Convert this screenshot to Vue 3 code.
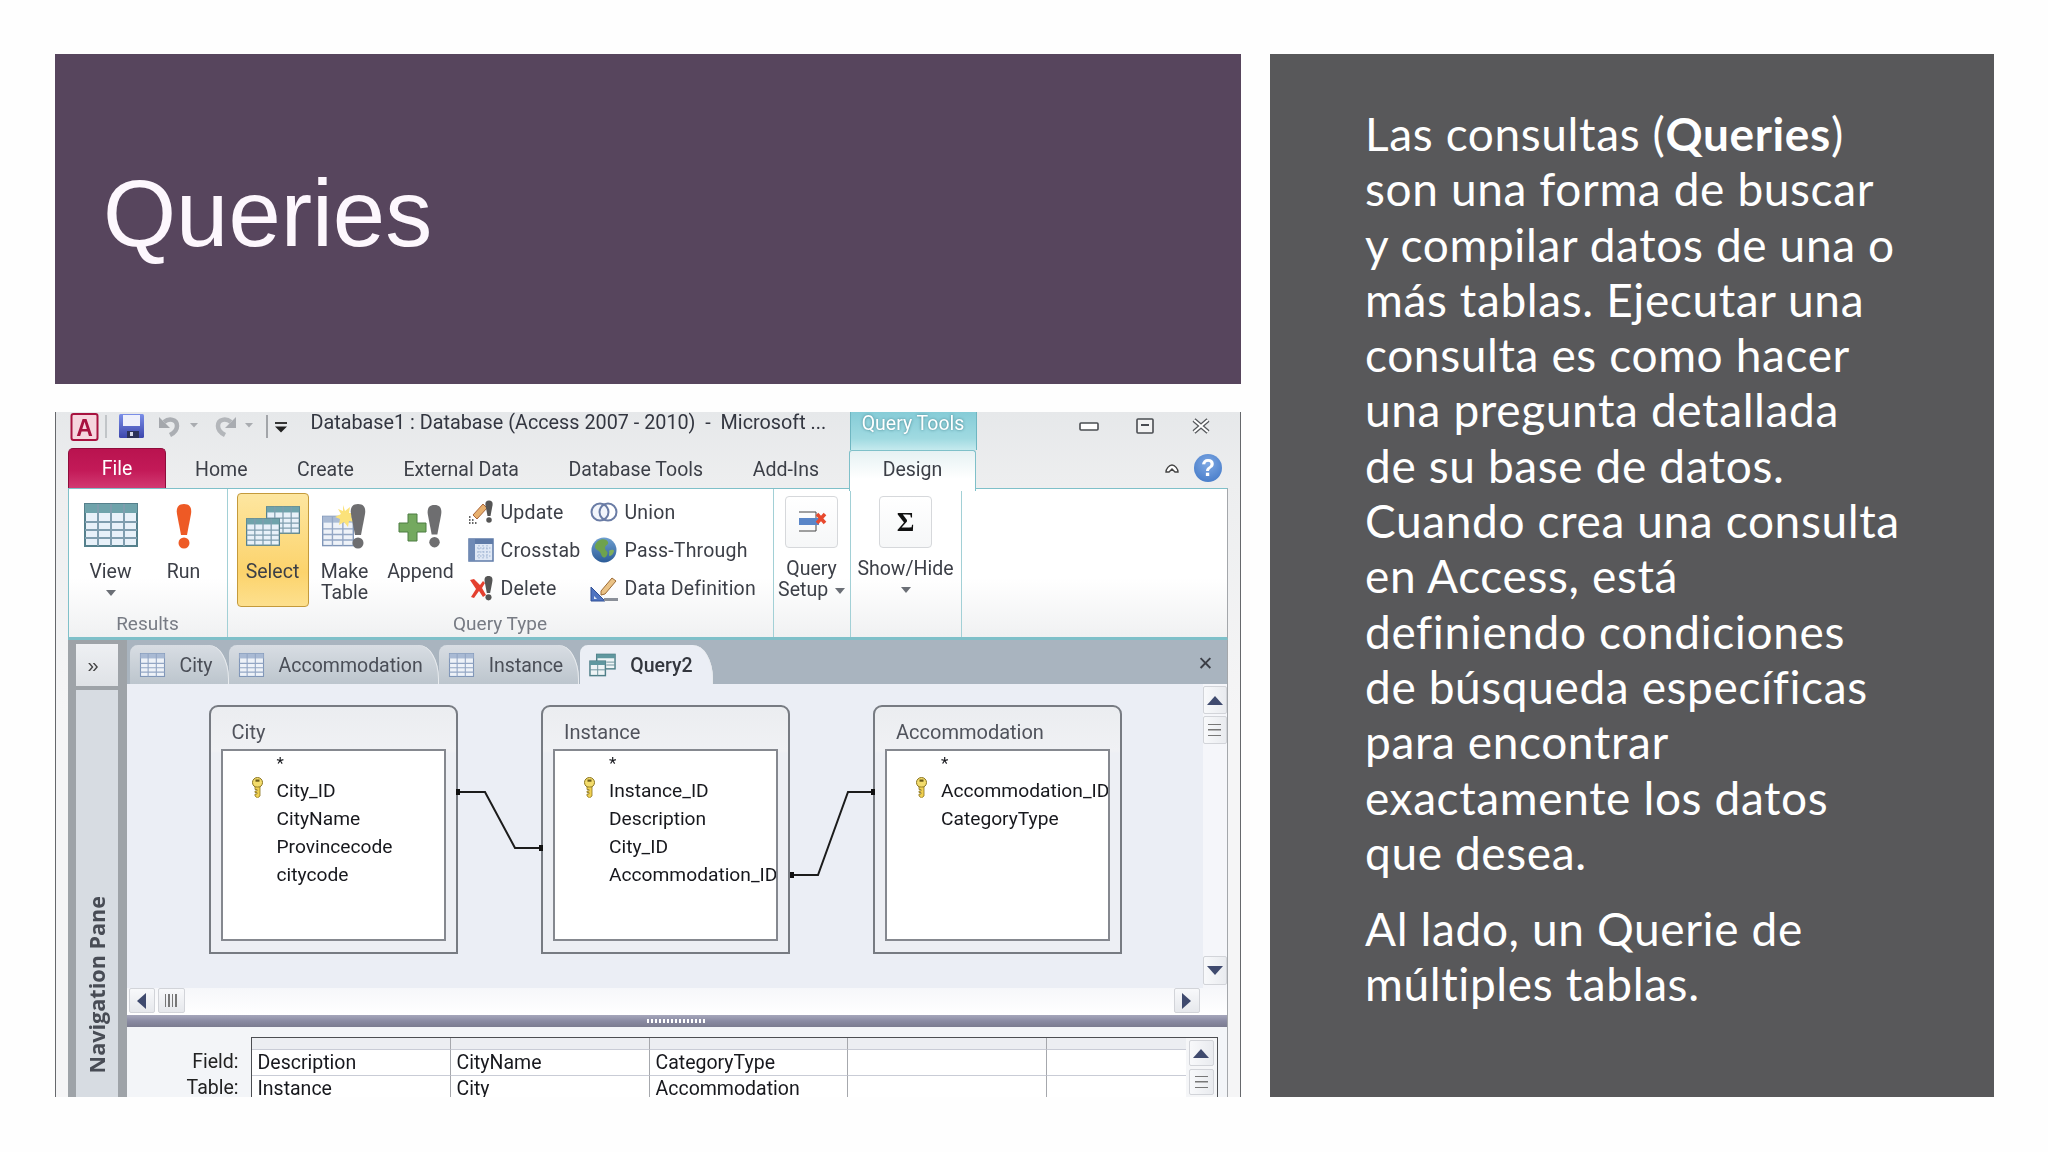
<script setup>
const tabs = ['Home', 'Create', 'External Data', 'Database Tools', 'Add-Ins']

const docTabs = [
  { name: 'City', icon: 'tbl' },
  { name: 'Accommodation', icon: 'tbl' },
  { name: 'Instance', icon: 'tbl' },
  { name: 'Query2', icon: 'qry', active: true },
]

const boxes = [
  { name: 'City', left: 82, fields: ['City_ID', 'CityName', 'Provincecode', 'citycode'] },
  { name: 'Instance', left: 414.5, fields: ['Instance_ID', 'Description', 'City_ID', 'Accommodation_ID'] },
  { name: 'Accommodation', left: 746.5, fields: ['Accommodation_ID', 'CategoryType'] },
]

const gridRows = [
  ['', '', '', '', ''],
  ['Description', 'CityName', 'CategoryType', '', ''],
  ['Instance', 'City', 'Accommodation', '', ''],
]
</script>

<template>
  <div class="slide">
    <svg class="defs" width="0" height="0">
      <symbol id="tbl" viewBox="0 0 54 44">
        <rect x="1" y="1" width="52" height="42" fill="#e8f1f9" stroke="#55808c" stroke-width="2" />
        <rect x="1" y="1" width="52" height="9" fill="#6fa3ab" />
        <path d="M1 19h52M1 27h52M1 35h52M14 1v42M27 1v42M40 1v42" stroke="#7f9dae" stroke-width="2" fill="none" />
      </symbol>
      <symbol id="blue-tbl" viewBox="0 0 46 44">
        <rect x="1" y="1" width="44" height="42" fill="#eef2f8" stroke="#8096b8" stroke-width="2" />
        <rect x="1" y="1" width="44" height="9" fill="#a9bad4" />
        <path d="M1 19h44M1 27h44M1 35h44M15 1v42M30 1v42" stroke="#93a6c4" stroke-width="2" fill="none" />
      </symbol>
      <symbol id="qry" viewBox="0 0 28 24">
        <rect x="8" y="1" width="19" height="15" fill="#eef4f6" stroke="#4f7f88" stroke-width="1.5" />
        <rect x="8" y="1" width="19" height="4" fill="#5f979f" />
        <rect x="1" y="8" width="16" height="15" fill="#eef4f6" stroke="#4f7f88" stroke-width="1.5" />
        <rect x="1" y="8" width="16" height="4" fill="#5f979f" />
        <path d="M1 17h16M9 12v11M18 9h9M18 12h9" stroke="#6c939c" fill="none" />
      </symbol>
      <symbol id="bang" viewBox="0 0 20 46">
        <path d="M10 1C4 1 2 5 3 11l4 21h6l4-21C18 5 16 1 10 1Z" fill="currentColor" />
        <circle cx="10" cy="40" r="5.5" fill="currentColor" />
      </symbol>
      <symbol id="key" viewBox="0 0 13 21">
        <circle cx="6.500" cy="5.500" r="5" fill="#f3dc6c" stroke="#8a7420" />
        <path d="M4 10h5v9l-2.500 2L4 19v-2h2v-1.500H4v-1.500h2v-1.500H4Z" fill="#f0d050" stroke="#8a7420" stroke-width=".8" />
        <rect x="4.500" y="2.500" width="4" height="2.200" fill="#6b5a18" />
      </symbol>
      <linearGradient id="floppy" x1="0" y1="0" x2="0" y2="1">
        <stop offset="0" stop-color="#7b8fe8" />
        <stop offset="1" stop-color="#3c46ac" />
      </linearGradient>
      <linearGradient id="globe" x1="0" y1="0" x2="0" y2="1">
        <stop offset="0" stop-color="#6e9fd0" />
        <stop offset="1" stop-color="#2c5c98" />
      </linearGradient>
    </svg>

    <div class="left">
      <header class="title-panel">
        <h1>Queries</h1>
      </header>

      <div class="win">
        <div class="titlebar">
          <svg class="qat" width="241" height="36" viewBox="0 0 241 36">
            <rect x="1.500" y="2" width="26" height="26" rx="2" fill="#f6d5de" stroke="#a8123f" stroke-width="2" />
            <text x="14.500" y="24" text-anchor="middle" font-family="Liberation Sans, sans-serif" font-weight="700" font-size="23" fill="#a8123f">A</text>
            <path d="M36 3v23" stroke="#b5b8bd" stroke-width="1.500" />
            <rect x="49" y="2" width="25" height="24" rx="1.500" fill="url(#floppy)" />
            <rect x="53" y="3" width="17" height="11" fill="#eef0fb" />
            <rect x="57" y="19" width="12" height="7" fill="#2c3258" />
            <rect x="60" y="20" width="3" height="4" fill="#d5d8e8" />
            <path d="M89 5v11h11Z" fill="#a4a7ac" />
            <path d="M94 10c5-4 13-3 13 4 0 4-3 7-7 9" stroke="#abaeb3" stroke-width="4.500" fill="none" />
            <path d="M120 11h8l-4 4.500Z" fill="#a9acb0" />
            <path d="M166 5v11h-11Z" fill="#a9acb1" />
            <path d="M161 10c-5-4-13-3-13 4 0 4 3 7 7 9" stroke="#b3b6ba" stroke-width="4.500" fill="none" />
            <path d="M175 11h8l-4 4.500Z" fill="#a9acb0" />
            <path d="M197 3v23" stroke="#8b8e93" stroke-width="1.500" />
            <path d="M205 11h12" stroke="#222" stroke-width="1.800" />
            <path d="M205 14.500h12l-6 6Z" fill="#222" />
          </svg>
          <div class="win-title">Database1 : Database (Access 2007 - 2010)&nbsp; -&nbsp; Microsoft ...</div>
          <div class="query-tools"><span>Query Tools</span></div>
          <div class="win-btns">
            <svg width="20" height="12" viewBox="0 0 20 12"><rect x="1" y="3" width="18" height="7" rx="1" fill="#fff" stroke="#4a4d52" stroke-width="1.600" /></svg>
            <svg width="18" height="16" viewBox="0 0 18 16"><rect x="1" y="1" width="16" height="14" rx="1" fill="#f3f3f3" stroke="#4a4d52" stroke-width="1.600" /><path d="M5 7h8" stroke="#4a4d52" stroke-width="2" /></svg>
            <svg width="20" height="16" viewBox="0 0 20 16"><path d="M3 2l14 12M17 2L3 14" stroke="#55585c" stroke-width="4.500" /><path d="M3 2l14 12M17 2L3 14" stroke="#fff" stroke-width="2" /></svg>
          </div>
        </div>

        <div class="tabrow">
          <div class="file-tab">File</div>
          <div class="tab-list">
            <span v-for="tab in tabs" :key="tab">{{ tab }}</span>
          </div>
          <div class="design-tab">Design</div>
          <div class="tab-right">
            <svg width="16" height="12" viewBox="0 0 16 12"><path d="M2 10c0-3 3-7 6-7s6 4 6 7l-3 0-3-3-3 3Z" fill="#fff" stroke="#444" stroke-width="1.400" /></svg>
            <div class="help">?</div>
          </div>
        </div>

        <div class="ribbon">
          <section class="group g-results">
            <div class="group-body">
              <div class="big w74">
                <svg class="big-icon" width="54" height="46"><use href="#tbl" width="54" height="44" /></svg>
                <span>View</span>
                <i class="drop"></i>
              </div>
              <div class="big w72">
                <svg class="big-icon" width="20" height="46" style="color:#ee5a25"><use href="#bang" width="20" height="46" /></svg>
                <span>Run</span>
              </div>
            </div>
            <div class="group-name">Results</div>
          </section>

          <section class="group g-type">
            <div class="group-body">
              <div class="big w72 selected">
                <svg class="big-icon" width="54" height="46" viewBox="0 0 54 46">
                  <use href="#tbl" x="20" y="0" width="34" height="34" />
                  <use href="#tbl" x="0" y="12" width="34" height="34" />
                </svg>
                <span>Select</span>
              </div>
              <div class="big w72">
                <svg class="big-icon" width="46" height="46" viewBox="0 0 46 46" style="color:#6e6e70">
                  <use href="#blue-tbl" x="0" y="12" width="32" height="32" />
                  <path d="M21 2l2 6 5-4-1 6 7 0-5 4 4 5-6-1-1 6-4-5-5 3 1-6-5-2 6-3-3-5 5 2Z" fill="#fbe27a" />
                  <use href="#bang" x="26" y="0" width="20" height="46" />
                </svg>
                <span>Make<br />Table</span>
              </div>
              <div class="big w80">
                <svg class="big-icon" width="46" height="46" viewBox="0 0 46 46" style="color:#6e6e70">
                  <path d="M10 11h9v9h9v9h-9v9h-9v-9H1v-9h9Z" fill="#74a95f" stroke="#4d7d43" />
                  <use href="#bang" x="27" y="0" width="19" height="46" />
                </svg>
                <span>Append</span>
              </div>
              <div class="small-col c1">
                <div class="small">
                  <svg width="26" height="26" viewBox="0 0 26 26" style="color:#555">
                    <path d="M5 16L15 5l4 4-10 11Z" fill="#e8b06e" stroke="#a8643a" />
                    <path d="M1 18h1.500M4 21h1.500M1 21h1.500M1 24h1.500M4 24h1.500M7 24h1.500" stroke="#333" stroke-width="1.500" />
                    <use href="#bang" x="16" y="0" width="10" height="25" />
                  </svg>
                  <span>Update</span>
                </div>
                <div class="small">
                  <svg width="26" height="26" viewBox="0 0 26 26">
                    <rect x="1" y="2" width="24" height="22" fill="#dfe8f5" stroke="#5f7ba8" stroke-width="1.500" />
                    <rect x="1" y="2" width="24" height="5" fill="#5f7ba8" />
                    <rect x="1" y="2" width="6" height="22" fill="#6f8ab5" />
                    <path d="M9 11h14M9 15h14M9 19h14M11 8v15M15 8v15M19 8v15" stroke="#9ab0d0" stroke-dasharray="1.500 1.500" />
                  </svg>
                  <span>Crosstab</span>
                </div>
                <div class="small">
                  <svg width="26" height="26" viewBox="0 0 26 26" style="color:#555">
                    <path d="M2 5l4-1 6 6 3-4 2 2-3 5 4 7-3 2-4-6-5 7-3-1 5-8Z" fill="#e4402f" />
                    <use href="#bang" x="15" y="0" width="11" height="26" />
                  </svg>
                  <span>Delete</span>
                </div>
              </div>
              <div class="small-col">
                <div class="small">
                  <svg width="28" height="26" viewBox="0 0 28 26"><circle cx="10" cy="13" r="8.500" fill="#f2f5fb" stroke="#6a7ca5" stroke-width="2" /><circle cx="18" cy="13" r="8.500" fill="none" stroke="#6a7ca5" stroke-width="2" /></svg>
                  <span>Union</span>
                </div>
                <div class="small">
                  <svg width="28" height="28" viewBox="0 0 28 28"><circle cx="14" cy="14" r="12.500" fill="url(#globe)" /><path d="M8 5c4-3 9-2 10 1s-3 3-3 6 4 3 2 7-5 3-6-1-6-4-6-7 1-4 3-6Z" fill="#6ea24e" /><path d="M19 15c3-2 5-1 5 0s-2 5-4 5 0-3-1-5Z" fill="#7fae5c" /></svg>
                  <span>Pass-Through</span>
                </div>
                <div class="small">
                  <svg width="28" height="28" viewBox="0 0 28 28"><path d="M1 27V13l14 14Z" fill="#4f74c0" stroke="#2f4f96" /><path d="M4 22v3h3Z" fill="#dfe7f6" /><path d="M11 17L22 4l4 3-11 13-4 1Z" fill="#eac285" stroke="#9c6b35" /><rect x="14" y="24" width="14" height="3" fill="#8a8f98" /></svg>
                  <span>Data Definition</span>
                </div>
              </div>
            </div>
            <div class="group-name">Query Type</div>
          </section>

          <section class="group g-setup">
            <div class="tool-btn">
              <svg width="30" height="26" viewBox="0 0 30 26">
                <path d="M2 3h17M2 22h17M19 3v19" stroke="#444" fill="none" />
                <rect x="2" y="9" width="20" height="7" fill="#5a86c8" />
                <path d="M20 5l8 9M28 5l-8 9" stroke="#e8492e" stroke-width="3.500" />
              </svg>
            </div>
            <div class="tool-label">Query<br />Setup <i class="drop inline"></i></div>
          </section>

          <section class="group g-show">
            <div class="tool-btn"><span class="sigma">Σ</span></div>
            <div class="tool-label">Show/Hide<br /><i class="drop"></i></div>
          </section>
        </div>

        <div class="work">
          <aside class="nav">
            <div class="nav-toggle">»</div>
            <div class="nav-pane"><span>Navigation Pane</span></div>
          </aside>

          <div class="doc">
            <div class="doc-tabs">
              <div v-for="t in docTabs" :key="t.name" class="doc-tab" :class="{ active: t.active }">
                <svg width="27" height="24"><use :href="'#' + (t.icon === 'tbl' ? 'blue-tbl' : 'qry')" width="27" height="24" /></svg>
                <span>{{ t.name }}</span>
              </div>
              <div class="doc-close">✕</div>
            </div>

            <div class="upper">
              <div class="upper-main">
                <div class="canvas">
                  <div v-for="box in boxes" :key="box.name" class="tbox" :style="{ left: box.left + 'px' }">
                    <div class="tbox-title">{{ box.name }}</div>
                    <div class="tbox-list">
                      <div class="star">*</div>
                      <div v-for="(f, i) in box.fields" :key="f" class="field">
                        <svg v-if="i === 0" class="key" width="13" height="21"><use href="#key" width="13" height="21" /></svg>
                        <span>{{ f }}</span>
                      </div>
                    </div>
                  </div>
                  <svg class="joins" width="1076" height="304" viewBox="0 0 1076 304">
                    <path d="M331 108h27l30 56h26M664 191h27l30-83h25" fill="none" stroke="#1c1c1c" stroke-width="2" />
                    <path d="M329 105h4v6h-4ZM412 161h4v6h-4ZM663 188h4v6h-4ZM744 105h4v6h-4Z" fill="#111" />
                  </svg>
                </div>
                <div class="vscroll">
                  <div class="sbtn up"><i class="tri-up"></i></div>
                  <div class="sbtn thumb"><i class="grip"></i></div>
                  <div class="vtrack"></div>
                  <div class="sbtn down"><i class="tri-down"></i></div>
                </div>
              </div>
              <div class="hscroll">
                <div class="hbtn"><i class="tri-left"></i></div>
                <div class="hbtn hthumb"><i class="hgrip"></i></div>
                <div class="htrack"></div>
                <div class="hbtn"><i class="tri-right"></i></div>
              </div>
            </div>

            <div class="splitter"><span class="dots"></span></div>

            <div class="lower">
              <div class="row-labels">
                <div>Field:</div>
                <div>Table:</div>
              </div>
              <div class="qbe">
                <div class="qbe-cells">
                  <template v-for="(row, r) in gridRows" :key="r">
                    <div v-for="(cell, c) in row" :key="c" class="cell" :class="{ head: r === 0 }">{{ cell }}</div>
                  </template>
                </div>
                <div class="qbe-scroll">
                  <div class="sbtn small-up"><i class="tri-up"></i></div>
                  <div class="sbtn small-thumb"><i class="grip"></i></div>
                </div>
              </div>
            </div>
          </div>
        </div>
      </div>
    </div>

    <aside class="notes">
      <p>Las consultas (<b>Queries</b>)<br />son una forma de buscar<br />y compilar datos de una o<br />más tablas. Ejecutar una<br />consulta es como hacer<br />una pregunta detallada<br />de su base de datos.<br />Cuando crea una consulta<br />en Access, está<br />definiendo condiciones<br />de búsqueda específicas<br />para encontrar<br />exactamente los datos<br />que desea.</p>
      <p>Al lado, un Querie de<br />múltiples tablas.</p>
    </aside>
  </div>
</template>

<style scoped>
.slide {
  width: 2048px;
  height: 1152px;
  box-sizing: border-box;
  padding: 54px 54px 55px 55px;
  display: flex;
  gap: 29px;
  background: #fefefe;
  overflow: hidden;
}

.defs {
  position: absolute;
}

.left {
  width: 1186px;
  display: flex;
  flex-direction: column;
  gap: 28px;
}

.title-panel {
  height: 330px;
  background: #57455d;
  display: flex;
  align-items: center;
  padding: 0 0 10px 48px;
  box-sizing: border-box;
}

.title-panel h1 {
  margin: 0;
  color: #fdf7fd;
  font: 400 94px/1 "Liberation Sans", Arial, sans-serif;
}

.notes {
  width: 724px;
  box-sizing: border-box;
  background: #58585a;
  padding: 52px 0 0 95px;
  color: #fff;
  font: 400 46px/55.3px Lato, "Open Sans", sans-serif;
  letter-spacing: 0.62px;
}

.notes p {
  margin: 0 0 21px;
}

/* access window */
.win {
  height: 685px;
  box-sizing: border-box;
  overflow: hidden;
  border-left: 1.5px solid #66686c;
  border-right: 1.5px solid #66686c;
  background: linear-gradient(#e6e8ea 0, #edeeef 70px, #f5f5f6 300px);
  font-family: Roboto, "Noto Sans", sans-serif;
  font-size: 19.5px;
  color: #3c3f47;
  filter: blur(0.45px);
}

.titlebar {
  height: 36px;
  display: flex;
  padding-left: 13.5px;
}

.qat {
  flex: none;
}

.win-title {
  width: 539px;
  flex: none;
  padding-top: 1px;
  line-height: 19px;
  box-sizing: border-box;
  white-space: nowrap;
  font-size: 19.8px;
  color: #333640;
}

.query-tools {
  width: 127px;
  height: 38px;
  flex: none;
  box-sizing: border-box;
  text-align: center;
  background: linear-gradient(#86ccd7, #a0dae1 70%, #c5eaee);
  border-left: 1px solid #6fb6c1;
  border-right: 1px solid #6fb6c1;
  color: #fff;
  font-size: 19.5px;
  line-height: 23px;
  text-shadow: 0 0 3px #3f7f8a;
}

.win-btns {
  flex: 1;
  display: flex;
  align-items: center;
  gap: 37px;
  padding: 0 0 8px 102px;
}

.tabrow {
  height: 40px;
  display: flex;
  position: relative;
  z-index: 1;
  padding-left: 12px;
}

.file-tab {
  width: 98px;
  flex: none;
  box-sizing: border-box;
  border-radius: 5px 5px 0 0;
  background: linear-gradient(#b9134f, #c31a58 55%, #d23a72);
  border: 1px solid #8e0d3b;
  border-bottom: 0;
  color: #fff;
  text-align: center;
  line-height: 40px;
}

.tab-list {
  width: 683px;
  flex: none;
  box-sizing: border-box;
  display: flex;
  justify-content: space-between;
  align-items: center;
  padding: 2px 30px 0 29px;
  white-space: nowrap;
}

.design-tab {
  width: 127px;
  height: 41px;
  margin-top: 2px;
  flex: none;
  box-sizing: border-box;
  text-align: center;
  line-height: 38px;
  border: 1.5px solid #7fc0c9;
  border-bottom: 0;
  border-radius: 3px 3px 0 0;
  background: linear-gradient(#e6f1f3, #fff 70%);
}

.tab-right {
  display: flex;
  align-items: center;
  gap: 14px;
  margin-left: auto;
  padding: 0 18px 0 0;
}

.help {
  width: 28px;
  height: 28px;
  border-radius: 50%;
  background: radial-gradient(circle at 50% 35%, #7fa9e4, #3d74c4);
  color: #fff;
  font: 700 23px/28px "Liberation Sans", sans-serif;
  text-align: center;
}

.ribbon {
  height: 152px;
  box-sizing: border-box;
  margin: 0 12.5px 0 11.5px;
  display: flex;
  background: linear-gradient(#fff 60%, #f0f1f2);
  border: 1.5px solid #7fc0c9;
  border-bottom-width: 3px;
  border-right-color: #a4a7ab;
}

.group {
  height: 100%;
  box-sizing: border-box;
  flex: none;
  position: relative;
  border-right: 1.5px solid #a2d0d6;
}

.g-results {
  width: 159px;
  padding-left: 5px;
}

.g-type {
  width: 546px;
  padding-left: 9px;
}

.g-setup {
  width: 77px;
}

.g-show {
  width: 111px;
}

.group-body {
  display: flex;
  padding-top: 4px;
}

.group-name {
  position: absolute;
  left: 0;
  right: 0;
  top: 124px;
  text-align: center;
  color: #777b84;
  font-size: 19px;
  line-height: 22px;
}

.big {
  height: 114px;
  flex: none;
  box-sizing: border-box;
  display: flex;
  flex-direction: column;
  align-items: center;
  padding-top: 10px;
  text-align: center;
  line-height: 21px;
  white-space: nowrap;
}

.big-icon {
  display: block;
  margin-bottom: 12px;
  flex: none;
}

.w72 {
  width: 72px;
}

.w74 {
  width: 74px;
}

.w80 {
  width: 80px;
}

.selected {
  border: 1px solid #c49a3b;
  border-radius: 4px;
  padding-top: 9px;
  background: linear-gradient(#fde6a0, #fcd36c 70%, #fde08e);
}

.drop {
  display: block;
  width: 0;
  height: 0;
  margin: 8px auto 0;
  border: 5px solid transparent;
  border-top: 6px solid #6b6f76;
  border-bottom: 0;
}

.drop.inline {
  display: inline-block;
  margin: 0 0 2px 2px;
}

.small-col {
  margin-left: 7px;
  width: 122px;
  flex: none;
}

.c1 + .small-col {
  margin-left: 0;
  width: 180px;
}

.small {
  height: 38px;
  display: flex;
  align-items: center;
  gap: 7px;
  white-space: nowrap;
  letter-spacing: 0.2px;
}

.small svg {
  flex: none;
}

.tool-btn {
  width: 53px;
  height: 52px;
  box-sizing: border-box;
  margin: 7px auto 0;
  border: 1.5px solid #d6d8db;
  border-radius: 4px;
  background: linear-gradient(#fff, #f6f7f8);
  display: flex;
  align-items: center;
  justify-content: center;
}

.sigma {
  font: 700 27px/1 "Liberation Serif", serif;
  color: #111;
}

.tool-label {
  margin-top: 10px;
  text-align: center;
  line-height: 21px;
  white-space: nowrap;
}

.work {
  display: flex;
  height: 457px;
  padding-left: 11.5px;
}

.nav {
  width: 59px;
  flex: none;
  box-sizing: border-box;
  background: #9ea3a8;
  padding: 4px 9px 0 8px;
  display: flex;
  flex-direction: column;
  gap: 4px;
}

.nav-toggle {
  height: 42px;
  flex: none;
  background: linear-gradient(#eef0f3, #dfe2e6);
  text-align: center;
  padding-right: 7px;
  font: 400 20px/42px "Liberation Sans", sans-serif;
  color: #444;
}

.nav-pane {
  flex: 1;
  background: #d7dce2;
  display: flex;
  justify-content: center;
  align-items: flex-end;
  padding-bottom: 24px;
}

.nav-pane span {
  writing-mode: vertical-rl;
  transform: rotate(180deg);
  font: 700 21.6px/1 "Open Sans", sans-serif;
  color: #484c55;
  white-space: nowrap;
}

.doc {
  width: 1100px;
  flex: none;
  display: flex;
  flex-direction: column;
  background: #f3f5f8;
  border-right: 1.5px solid #a4a7ab;
  box-sizing: content-box;
}

.doc-tabs {
  height: 44px;
  flex: none;
  box-sizing: border-box;
  padding: 5px 0 0 3px;
  display: flex;
  background: #a9b4bf;
  position: relative;
}

.doc-tab {
  display: flex;
  align-items: center;
  gap: 14px;
  padding: 1px 16px 0 9px;
  white-space: nowrap;
  border-radius: 8px 20px 0 0 / 8px 34px 0 0;
  background: linear-gradient(#d8dde3, #bcc5cd);
  color: #4a4e57;
  box-shadow: inset -1px 0 0 #e8ebee;
}

.doc-tab.active {
  background: #ebeef5;
  color: #33363e;
  font-weight: 500;
  padding-right: 20px;
  margin-left: 1px;
}

.doc-close {
  position: absolute;
  right: 13px;
  top: 14px;
  font: 400 19px/1 "DejaVu Sans", sans-serif;
  color: #3c3f47;
}

.upper {
  height: 331px;
  flex: none;
  display: flex;
  flex-direction: column;
  background: #ebeef5;
}

.upper-main {
  height: 304px;
  flex: none;
  display: flex;
}

.canvas {
  flex: 1;
  position: relative;
}

.joins {
  position: absolute;
  left: 0;
  top: 0;
  pointer-events: none;
}

.tbox {
  position: absolute;
  top: 21px;
  width: 249px;
  height: 249px;
  box-sizing: border-box;
  padding: 0 10px 11px 10px;
  display: flex;
  flex-direction: column;
  border: 2px solid #777b82;
  border-radius: 9px 9px 0 0;
  background: linear-gradient(#ebedf0, #f0f1f4 44px, #edeff4 46px);
}

.tbox-title {
  height: 42px;
  flex: none;
  padding-left: 11px;
  line-height: 50px;
  font-size: 20px;
  color: #50535c;
  white-space: nowrap;
}

.tbox-list {
  flex: 1;
  background: #fff;
  border: 2px solid #85888f;
  overflow: hidden;
  color: #17181d;
  font-size: 19.2px;
}

.star {
  height: 26px;
  padding-left: 54px;
  line-height: 24px;
  font-size: 17px;
}

.field {
  height: 28px;
  padding-left: 54px;
  line-height: 28px;
  white-space: nowrap;
  position: relative;
}

.key {
  position: absolute;
  left: 28px;
  top: 0;
}

.vscroll {
  width: 24px;
  flex: none;
  display: flex;
  flex-direction: column;
  padding-top: 2px;
  box-sizing: border-box;
  background: #f5f6fa;
}

.sbtn {
  flex: none;
  display: flex;
  align-items: center;
  justify-content: center;
  box-sizing: border-box;
  background: linear-gradient(90deg, #f8f9fb, #e9ebef);
  border: 1.5px solid #d2d4d9;
  border-radius: 2px;
}

.up {
  height: 28px;
}

.thumb {
  height: 28px;
  margin-top: 2px;
}

.vtrack {
  flex: 1;
}

.down {
  height: 29px;
  margin-bottom: 3px;
}

.tri-up,
.tri-down,
.tri-left,
.tri-right {
  display: block;
  width: 0;
  height: 0;
  border: 8px solid transparent;
}

.tri-up {
  border-top: 0;
  border-bottom: 9px solid #3f4a6e;
}

.tri-down {
  border-bottom: 0;
  border-top: 9px solid #3f4a6e;
}

.tri-left {
  border-left: 0;
  border-right: 9px solid #3f4a6e;
}

.tri-right {
  border-right: 0;
  border-left: 9px solid #3f4a6e;
}

.grip {
  display: block;
  width: 13px;
  height: 10px;
  border-top: 1.5px solid #777;
  border-bottom: 1.5px solid #777;
  background: linear-gradient(#777, #777) center / 100% 1.5px no-repeat;
}

.hscroll {
  flex: 1;
  display: flex;
  align-items: flex-start;
  gap: 3px;
  padding-left: 2px;
  background: linear-gradient(#f6f7fa, #fff);
}

.hbtn {
  width: 26px;
  height: 25px;
  flex: none;
  box-sizing: border-box;
  display: flex;
  align-items: center;
  justify-content: center;
  background: linear-gradient(#f8f9fb, #e6e8ec);
  border: 1.5px solid #d2d4d9;
  border-radius: 2px;
}

.hthumb {
  width: 27px;
}

.hgrip {
  display: block;
  width: 12px;
  height: 13px;
  background: repeating-linear-gradient(90deg, #777 0 1.5px, transparent 1.5px 3.5px);
}

.htrack {
  width: 983px;
  flex: none;
}

.splitter {
  height: 12px;
  flex: none;
  display: flex;
  align-items: center;
  justify-content: center;
  background: linear-gradient(#a6a7bb, #8a8ba3 50%, #7b7c90);
}

.dots {
  width: 60px;
  height: 4px;
  background: repeating-linear-gradient(90deg, #fff 0 2px, transparent 2px 4px);
}

.lower {
  flex: 1;
  display: flex;
  padding-top: 10px;
  min-height: 0;
  overflow: hidden;
}

.row-labels {
  width: 112px;
  flex: none;
  margin-right: 12px;
  padding-top: 12px;
  text-align: right;
  line-height: 26px;
  color: #222;
}

.qbe {
  width: 967px;
  flex: none;
  height: 84px;
  box-sizing: border-box;
  display: flex;
  border: 1.5px solid #4c4e52;
  background: #fff;
}

.qbe-cells {
  flex: 1;
  display: grid;
  grid-template-columns: 199px 199px 198px 199px 1fr;
  grid-template-rows: 12px 26px 26px;
  color: #17181d;
}

.cell {
  box-sizing: border-box;
  padding-left: 6px;
  line-height: 26px;
  white-space: nowrap;
  border-right: 1.5px solid #a6a8ad;
  border-bottom: 1.5px solid #c9ccd6;
}

.cell:nth-child(5n) {
  border-right: 0;
}

.cell.head {
  background: #eceef2;
}

.qbe-scroll {
  width: 31px;
  flex: none;
  box-sizing: border-box;
  padding: 2px 3px 0;
  display: flex;
  flex-direction: column;
  gap: 3px;
  background: #f5f6f8;
}

.small-up,
.small-thumb {
  height: 26px;
}
</style>

<style>
html,
body {
  margin: 0;
  background: #fefefe;
}
</style>
